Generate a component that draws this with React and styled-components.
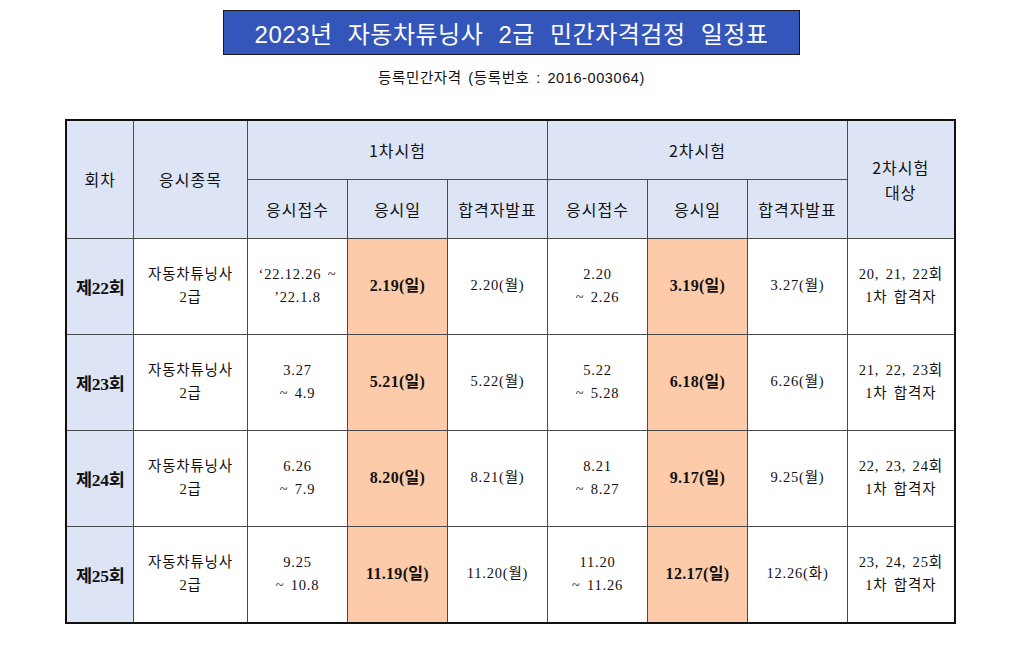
import styled, { createGlobalStyle } from 'styled-components'

const GlobalStyle = createGlobalStyle`
  html, body {
    margin: 0;
    padding: 0;
    background: #ffffff;
  }
  body {
    font-family: "Liberation Serif", "Noto Sans CJK KR", serif;
    color: #111;
  }
`;

const Page = styled.div`
  width: 1023px;
  height: 653px;
  display: flex;
  flex-direction: column;
  align-items: center;
  padding-top: 10px;
  box-sizing: border-box;
`;

const TitleBox = styled.div`
  width: 577px;
  height: 45px;
  box-sizing: border-box;
  background-color: #3456bb;
  border: 1px solid #1a1a1a;
  display: flex;
  align-items: center;
  justify-content: center;
  color: #ffffff;
  font-family: "Liberation Sans", "Noto Sans CJK KR", sans-serif;
  font-size: 24px;
  word-spacing: 8px;
  letter-spacing: 0.5px;
`;

const Sub = styled.div`
  margin-top: 11px;
  font-size: 14.5px;
  font-family: "Liberation Sans", "Noto Sans CJK KR", sans-serif;
  letter-spacing: 0.6px;
  word-spacing: 2px;
  color: #111;
`;

const Table = styled.table`
  margin-top: 32px;
  margin-left: -2px;
  border-collapse: collapse;
  table-layout: fixed;
  border: 2px solid #111;
  width: 888px;
`;

const Col = styled.col`
  width: ${p => p.$w}px;
`;

const Th = styled.th`
  height: 58px;
  background-color: #dde4f5;
  border: 1px solid #4a4a4a;
  font-weight: normal;
  font-size: 16px;
  letter-spacing: 1px;
  line-height: 25px;
  text-align: center;
  vertical-align: middle;
  padding: 0;
  font-family: "Noto Sans CJK KR", sans-serif;
`;

const Round = styled.td`
  height: 93px;
  background-color: #dde4f5;
  border: 1px solid #4a4a4a;
  font-weight: bold;
  font-size: 17.5px;
  text-align: center;
  padding: 0;
  letter-spacing: -0.3px;
`;

const Td = styled.td`
  height: 93px;
  border: 1px solid #4a4a4a;
  background-color: ${p => (p.$hl ? '#fdcbaa' : '#ffffff')};
  font-size: ${p => (p.$hl ? '16px' : '14.5px')};
  font-weight: ${p => (p.$hl ? 'bold' : 'normal')};
  letter-spacing: ${p => (p.$hl ? '0.3px' : '0.8px')};
  word-spacing: 2px;
  line-height: 23px;
  text-align: center;
  vertical-align: middle;
  padding: 0;
  white-space: pre-line;
  padding-bottom: 2px;
`;

const rows = [
  {
    n: '제22회',
    a: '‘22.12.26 ~\n’22.1.8',
    b: '2.19(일)',
    c: '2.20(월)',
    d: '2.20\n~ 2.26',
    e: '3.19(일)',
    f: '3.27(월)',
    g: '20, 21, 22회\n1차 합격자',
  },
  {
    n: '제23회',
    a: '3.27\n~ 4.9',
    b: '5.21(일)',
    c: '5.22(월)',
    d: '5.22\n~ 5.28',
    e: '6.18(일)',
    f: '6.26(월)',
    g: '21, 22, 23회\n1차 합격자',
  },
  {
    n: '제24회',
    a: '6.26\n~ 7.9',
    b: '8.20(일)',
    c: '8.21(월)',
    d: '8.21\n~ 8.27',
    e: '9.17(일)',
    f: '9.25(월)',
    g: '22, 23, 24회\n1차 합격자',
  },
  {
    n: '제25회',
    a: '9.25\n~ 10.8',
    b: '11.19(일)',
    c: '11.20(월)',
    d: '11.20\n~ 11.26',
    e: '12.17(일)',
    f: '12.26(화)',
    g: '23, 24, 25회\n1차 합격자',
  },
];

const App = () => {
  return (
    <Page>
      <GlobalStyle />
      <TitleBox>2023년 자동차튜닝사 2급 민간자격검정 일정표</TitleBox>
      <Sub>등록민간자격 (등록번호 : 2016-003064)</Sub>
      <Table>
        <colgroup>
          <Col $w={67} />
          <Col $w={114} />
          <Col $w={100} />
          <Col $w={100} />
          <Col $w={100} />
          <Col $w={100} />
          <Col $w={100} />
          <Col $w={100} />
          <Col $w={107} />
        </colgroup>
        <thead>
          <tr>
            <Th rowSpan={2}>회차</Th>
            <Th rowSpan={2}>응시종목</Th>
            <Th colSpan={3}>1차시험</Th>
            <Th colSpan={3}>2차시험</Th>
            <Th rowSpan={2}>
              2차시험
              <br />
              대상
            </Th>
          </tr>
          <tr>
            <Th>응시접수</Th>
            <Th>응시일</Th>
            <Th>합격자발표</Th>
            <Th>응시접수</Th>
            <Th>응시일</Th>
            <Th>합격자발표</Th>
          </tr>
        </thead>
        <tbody>
          {rows.map(r => (
            <tr key={r.n}>
              <Round>{r.n}</Round>
              <Td>{'자동차튜닝사\n2급'}</Td>
              <Td>{r.a}</Td>
              <Td $hl>{r.b}</Td>
              <Td>{r.c}</Td>
              <Td>{r.d}</Td>
              <Td $hl>{r.e}</Td>
              <Td>{r.f}</Td>
              <Td>{r.g}</Td>
            </tr>
          ))}
        </tbody>
      </Table>
    </Page>
  )
}

export default App
